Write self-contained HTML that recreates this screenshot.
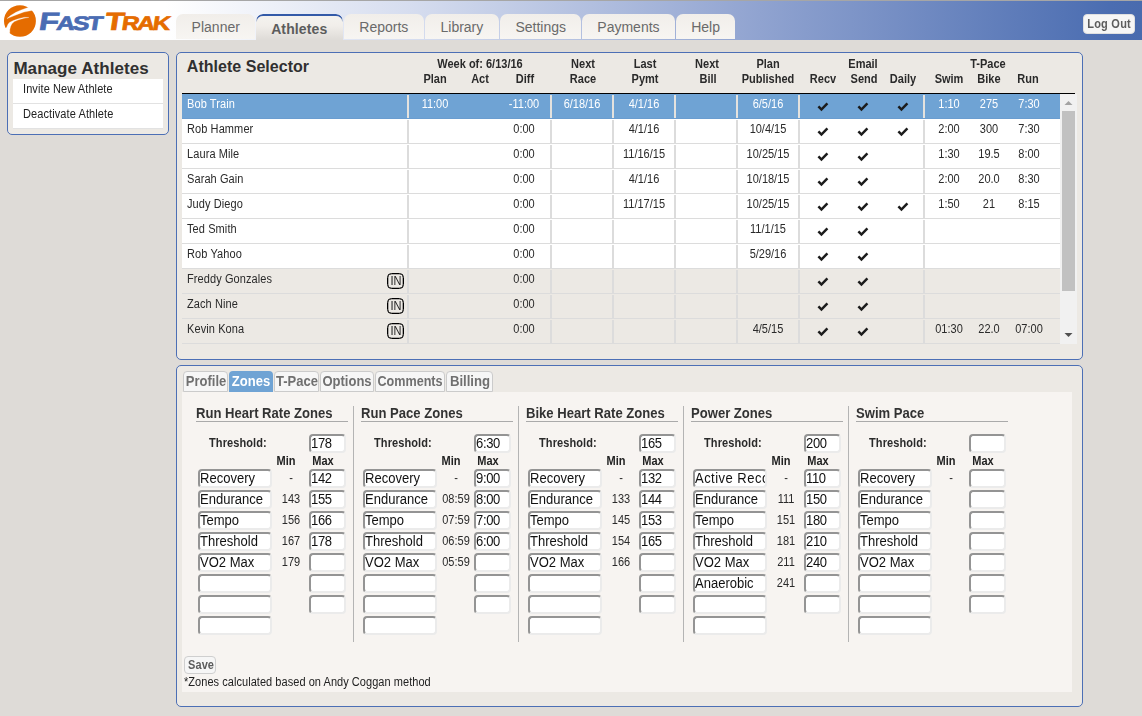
<!DOCTYPE html>
<html lang="en">
<head>
<meta charset="utf-8">
<title>FastTrak - Athletes</title>
<style>
html,body{margin:0;padding:0;}
body{width:1142px;height:716px;overflow:hidden;background:#dedbd7;font-family:"Liberation Sans", sans-serif;font-size:11px;color:#2a2a2a;position:relative;}
.b{position:absolute;box-sizing:border-box;}
.t{position:absolute;white-space:nowrap;display:block;}
.panel{background:#ece9e4;border:1px solid #4c6fb5;border-radius:5px;}
.inp{background:#fff;border-style:solid;border-width:2px;border-color:#949494 #ebebeb #ebebeb #949494;border-radius:4px;overflow:hidden;}
.inp span{position:absolute;left:0;top:-1px;font-size:14px;line-height:16px;white-space:nowrap;color:#111;transform:scaleX(0.93);transform-origin:0 0;}
.inp span.n{left:-0.3px;letter-spacing:-0.35px;}
.chk{position:absolute;}
</style>
</head>
<body>

<div class="b" style="left:0px;top:0px;width:1142px;height:40px;background:linear-gradient(to right,#ffffff 0,#ffffff 165px,#d6ddef 410px,#90a3d0 760px,#4b6db1 1110px,#496bae 1142px);"></div>
<div class="b" style="left:0px;top:0px;width:1142px;height:1px;background:#a6a6a6;"></div>
<svg class="b" style="left:0;top:0;width:40px;height:40px" viewBox="0 0 40 40">
<ellipse cx="19.95" cy="21" rx="15.95" ry="15.8" fill="#e56c00"/>
<path d="M7.0 18.6 L10.6 15.5 L15.9 12.35 L21.2 9.95 L28.1 7.55 L30.5 4.5 L35 8 L31.6 10.5 L23.9 12.1 L18.6 13.9 L13.3 16.05 Z" fill="#fff" stroke="#fff" stroke-width="0.3" stroke-linejoin="round"/>
<path d="M28.8 17.45 L23.9 17.4 L18.6 18.7 L13.3 20.6 L9.5 22.4 L8.0 24.3 L6.6 27.5 L3.5 29.5 L8.2 35.5 L9.8 32.2 L9.8 29.6 L10.6 26.4 L11.9 23.75 L14.3 21.6 L18.6 19.8 L23.9 18.2 Z" fill="#fff" stroke="#fff" stroke-width="0.3" stroke-linejoin="round"/>
</svg>
<div class="b" style="left:38.2px;top:7px;width:80px;height:28px;white-space:nowrap;font-weight:bold;transform-origin:0 23px;transform:scaleX(1.3) skewX(-7deg);line-height:28px;color:#4a6cb3;-webkit-text-stroke:0.7px #4a6cb3;letter-spacing:-1.7px;"><span style="font-size:25px;">F</span><span style="font-size:19.5px;">AST</span></div>
<div class="b" style="left:104.4px;top:7px;width:80px;height:28px;white-space:nowrap;font-weight:bold;transform-origin:0 23px;transform:scaleX(1.25) skewX(-7deg);line-height:28px;color:#e56c00;-webkit-text-stroke:0.7px #e56c00;letter-spacing:-1.7px;"><span style="font-size:25px;">T</span><span style="font-size:19.5px;">RAK</span></div>
<div class="b" style="left:176px;top:14px;width:79px;height:25px;border-radius:7px 7px 0 0;background:linear-gradient(#f1eeea,#f7f5f2);"></div>
<span class="t" style="top:19px;font-size:14px;line-height:16px;color:#6a6a6a;left:65.75px;width:300px;text-align:center;">Planner</span>
<div class="b" style="left:256px;top:14px;width:87px;height:26px;border-radius:7px 7px 0 0;background:linear-gradient(#f5f3f0,#f1eeea 45%,#dedbd7);"></div>
<div class="b" style="left:256px;top:14px;width:87px;height:26px;border-radius:7px 7px 0 0;border:1px solid #335aa8;border-top-width:2px;border-bottom:none;-webkit-mask-image:linear-gradient(to bottom,#000 0,#000 4px,transparent 8px);mask-image:linear-gradient(to bottom,#000 0,#000 4px,transparent 8px);"></div>
<span class="t" style="top:21px;font-size:14px;line-height:16px;font-weight:bold;color:#5c5c5c;letter-spacing:0.12px;left:149.20px;width:300px;text-align:center;text-indent:0.12px;">Athletes</span>
<div class="b" style="left:344px;top:14px;width:80px;height:25px;border-radius:7px 7px 0 0;background:linear-gradient(#f1eeea,#f7f5f2);"></div>
<span class="t" style="top:19px;font-size:14px;line-height:16px;color:#6a6a6a;left:233.80px;width:300px;text-align:center;">Reports</span>
<div class="b" style="left:425px;top:14px;width:74px;height:25px;border-radius:7px 7px 0 0;background:linear-gradient(#f1eeea,#f7f5f2);"></div>
<span class="t" style="top:19px;font-size:14px;line-height:16px;color:#6a6a6a;left:311.90px;width:300px;text-align:center;">Library</span>
<div class="b" style="left:500px;top:14px;width:81px;height:25px;border-radius:7px 7px 0 0;background:linear-gradient(#f1eeea,#f7f5f2);"></div>
<span class="t" style="top:19px;font-size:14px;line-height:16px;color:#6a6a6a;left:390.70px;width:300px;text-align:center;">Settings</span>
<div class="b" style="left:582px;top:14px;width:93px;height:25px;border-radius:7px 7px 0 0;background:linear-gradient(#f1eeea,#f7f5f2);"></div>
<span class="t" style="top:19px;font-size:14px;line-height:16px;color:#6a6a6a;left:478.45px;width:300px;text-align:center;">Payments</span>
<div class="b" style="left:676px;top:14px;width:59px;height:25px;border-radius:7px 7px 0 0;background:linear-gradient(#f1eeea,#f7f5f2);"></div>
<span class="t" style="top:19px;font-size:14px;line-height:16px;color:#6a6a6a;left:555.55px;width:300px;text-align:center;">Help</span>
<div class="b" style="left:1083px;top:14px;width:52px;height:20px;background:#f6f6f6;border:1px solid #e0e0e0;border-radius:4px;"></div>
<span class="t" style="top:17px;font-size:12px;line-height:14px;font-weight:bold;color:#5c5c5c;letter-spacing:0.25px;left:959.30px;width:300px;text-align:center;text-indent:0.25px;transform:scaleX(0.917);transform-origin:50% 0;">Log Out</span>
<div class="b panel" style="left:7px;top:52px;width:162px;height:83px;"></div>
<span class="t" style="top:59px;font-size:17px;line-height:19px;font-weight:bold;color:#303030;letter-spacing:0.06px;left:13.40px;">Manage Athletes</span>
<div class="b" style="left:13px;top:79px;width:150px;height:24px;background:#fff;"></div>
<div class="b" style="left:13px;top:103px;width:150px;height:1px;background:#e2e2e2;"></div>
<div class="b" style="left:13px;top:104px;width:150px;height:24px;background:#fff;"></div>
<div class="b" style="left:13px;top:128px;width:150px;height:1px;background:#e2e2e2;"></div>
<span class="t" style="top:82px;font-size:12px;line-height:14px;color:#222;letter-spacing:0.1px;left:23.20px;transform:scaleX(0.917);transform-origin:0 0;">Invite New Athlete</span>
<span class="t" style="top:107px;font-size:12px;line-height:14px;color:#222;letter-spacing:0.1px;left:23.20px;transform:scaleX(0.917);transform-origin:0 0;">Deactivate Athlete</span>
<div class="b panel" style="left:176px;top:52px;width:907px;height:308px;"></div>
<span class="t" style="top:58px;font-size:16px;line-height:18px;font-weight:bold;color:#303030;letter-spacing:0.03px;left:186.80px;">Athlete Selector</span>
<span class="t" style="top:57px;font-size:12px;line-height:14px;font-weight:bold;color:#2a2a2a;left:329.80px;width:300px;text-align:center;transform:scaleX(0.917);transform-origin:50% 0;">Week of: 6/13/16</span>
<span class="t" style="top:72px;font-size:12px;line-height:14px;font-weight:bold;color:#2a2a2a;left:285.20px;width:300px;text-align:center;transform:scaleX(0.917);transform-origin:50% 0;">Plan</span>
<span class="t" style="top:72px;font-size:12px;line-height:14px;font-weight:bold;color:#2a2a2a;left:330.20px;width:300px;text-align:center;transform:scaleX(0.917);transform-origin:50% 0;">Act</span>
<span class="t" style="top:72px;font-size:12px;line-height:14px;font-weight:bold;color:#2a2a2a;left:374.80px;width:300px;text-align:center;transform:scaleX(0.917);transform-origin:50% 0;">Diff</span>
<span class="t" style="top:57px;font-size:12px;line-height:14px;font-weight:bold;color:#2a2a2a;left:433.40px;width:300px;text-align:center;transform:scaleX(0.917);transform-origin:50% 0;">Next</span>
<span class="t" style="top:72px;font-size:12px;line-height:14px;font-weight:bold;color:#2a2a2a;left:433.20px;width:300px;text-align:center;transform:scaleX(0.917);transform-origin:50% 0;">Race</span>
<span class="t" style="top:57px;font-size:12px;line-height:14px;font-weight:bold;color:#2a2a2a;left:495.40px;width:300px;text-align:center;transform:scaleX(0.917);transform-origin:50% 0;">Last</span>
<span class="t" style="top:72px;font-size:12px;line-height:14px;font-weight:bold;color:#2a2a2a;left:495.10px;width:300px;text-align:center;transform:scaleX(0.917);transform-origin:50% 0;">Pymt</span>
<span class="t" style="top:57px;font-size:12px;line-height:14px;font-weight:bold;color:#2a2a2a;left:557.30px;width:300px;text-align:center;transform:scaleX(0.917);transform-origin:50% 0;">Next</span>
<span class="t" style="top:72px;font-size:12px;line-height:14px;font-weight:bold;color:#2a2a2a;left:557.60px;width:300px;text-align:center;transform:scaleX(0.917);transform-origin:50% 0;">Bill</span>
<span class="t" style="top:57px;font-size:12px;line-height:14px;font-weight:bold;color:#2a2a2a;left:618.00px;width:300px;text-align:center;transform:scaleX(0.917);transform-origin:50% 0;">Plan</span>
<span class="t" style="top:72px;font-size:12px;line-height:14px;font-weight:bold;color:#2a2a2a;left:618.10px;width:300px;text-align:center;transform:scaleX(0.917);transform-origin:50% 0;">Published</span>
<span class="t" style="top:72px;font-size:12px;line-height:14px;font-weight:bold;color:#2a2a2a;left:673.20px;width:300px;text-align:center;transform:scaleX(0.917);transform-origin:50% 0;">Recv</span>
<span class="t" style="top:57px;font-size:12px;line-height:14px;font-weight:bold;color:#2a2a2a;left:713.20px;width:300px;text-align:center;transform:scaleX(0.917);transform-origin:50% 0;">Email</span>
<span class="t" style="top:72px;font-size:12px;line-height:14px;font-weight:bold;color:#2a2a2a;left:713.50px;width:300px;text-align:center;transform:scaleX(0.917);transform-origin:50% 0;">Send</span>
<span class="t" style="top:72px;font-size:12px;line-height:14px;font-weight:bold;color:#2a2a2a;left:753.30px;width:300px;text-align:center;transform:scaleX(0.917);transform-origin:50% 0;">Daily</span>
<span class="t" style="top:57px;font-size:12px;line-height:14px;font-weight:bold;color:#2a2a2a;left:838.20px;width:300px;text-align:center;transform:scaleX(0.917);transform-origin:50% 0;">T-Pace</span>
<span class="t" style="top:72px;font-size:12px;line-height:14px;font-weight:bold;color:#2a2a2a;left:798.70px;width:300px;text-align:center;transform:scaleX(0.917);transform-origin:50% 0;">Swim</span>
<span class="t" style="top:72px;font-size:12px;line-height:14px;font-weight:bold;color:#2a2a2a;left:838.80px;width:300px;text-align:center;transform:scaleX(0.917);transform-origin:50% 0;">Bike</span>
<span class="t" style="top:72px;font-size:12px;line-height:14px;font-weight:bold;color:#2a2a2a;left:878.10px;width:300px;text-align:center;transform:scaleX(0.917);transform-origin:50% 0;">Run</span>
<div class="b" style="left:182px;top:93px;width:893px;height:1px;background:#000;"></div>
<div class="b row" style="left:182px;top:94px;width:878px;height:25px;background:#6fa3d4;border-bottom:1px solid #6a9dd0;">
<i class="b" style="left:225px;top:1px;width:2px;height:23px;background:#e4e2de"></i>
<i class="b" style="left:368px;top:1px;width:2px;height:23px;background:#e4e2de"></i>
<i class="b" style="left:430px;top:1px;width:2px;height:23px;background:#e4e2de"></i>
<i class="b" style="left:492px;top:1px;width:2px;height:23px;background:#e4e2de"></i>
<i class="b" style="left:554px;top:1px;width:2px;height:23px;background:#e4e2de"></i>
<i class="b" style="left:616px;top:1px;width:2px;height:23px;background:#e4e2de"></i>
<i class="b" style="left:741px;top:1px;width:2px;height:23px;background:#e4e2de"></i>
</div>
<span class="t" style="top:97px;font-size:12px;line-height:14px;color:#fff;letter-spacing:0.1px;left:187.30px;transform:scaleX(0.917);transform-origin:0 0;">Bob Train</span>
<span class="t" style="top:97px;font-size:12px;line-height:14px;color:#fff;left:285.00px;width:300px;text-align:center;transform:scaleX(0.917);transform-origin:50% 0;">11:00</span>
<span class="t" style="top:97px;font-size:12px;line-height:14px;color:#fff;left:373.80px;width:300px;text-align:center;transform:scaleX(0.917);transform-origin:50% 0;">-11:00</span>
<span class="t" style="top:97px;font-size:12px;line-height:14px;color:#fff;left:432.00px;width:300px;text-align:center;transform:scaleX(0.917);transform-origin:50% 0;">6/18/16</span>
<span class="t" style="top:97px;font-size:12px;line-height:14px;color:#fff;left:494.40px;width:300px;text-align:center;transform:scaleX(0.917);transform-origin:50% 0;">4/1/16</span>
<span class="t" style="top:97px;font-size:12px;line-height:14px;color:#fff;left:618.30px;width:300px;text-align:center;transform:scaleX(0.917);transform-origin:50% 0;">6/5/16</span>
<svg class="chk" style="left:817.0px;top:102px" width="12" height="10" viewBox="0 0 12 10"><path d="M0.5 5.35 L2.3 3.55 L4.45 5.7 L9.5 0.55 L11.3 2.35 L4.45 9.2 Z" fill="#1c1c1c"/></svg>
<svg class="chk" style="left:857.1px;top:102px" width="12" height="10" viewBox="0 0 12 10"><path d="M0.5 5.35 L2.3 3.55 L4.45 5.7 L9.5 0.55 L11.3 2.35 L4.45 9.2 Z" fill="#1c1c1c"/></svg>
<svg class="chk" style="left:897.0px;top:102px" width="12" height="10" viewBox="0 0 12 10"><path d="M0.5 5.35 L2.3 3.55 L4.45 5.7 L9.5 0.55 L11.3 2.35 L4.45 9.2 Z" fill="#1c1c1c"/></svg>
<span class="t" style="top:97px;font-size:12px;line-height:14px;color:#fff;left:799.30px;width:300px;text-align:center;transform:scaleX(0.917);transform-origin:50% 0;">1:10</span>
<span class="t" style="top:97px;font-size:12px;line-height:14px;color:#fff;left:838.60px;width:300px;text-align:center;transform:scaleX(0.917);transform-origin:50% 0;">275</span>
<span class="t" style="top:97px;font-size:12px;line-height:14px;color:#fff;left:879.00px;width:300px;text-align:center;transform:scaleX(0.917);transform-origin:50% 0;">7:30</span>
<div class="b row" style="left:182px;top:119px;width:878px;height:25px;background:#fff;border-bottom:1px solid #dcdcdc;">
<i class="b" style="left:225px;top:1px;width:2px;height:24px;background:#dcdcdc"></i>
<i class="b" style="left:368px;top:1px;width:2px;height:24px;background:#dcdcdc"></i>
<i class="b" style="left:430px;top:1px;width:2px;height:24px;background:#dcdcdc"></i>
<i class="b" style="left:492px;top:1px;width:2px;height:24px;background:#dcdcdc"></i>
<i class="b" style="left:554px;top:1px;width:2px;height:24px;background:#dcdcdc"></i>
<i class="b" style="left:616px;top:1px;width:2px;height:24px;background:#dcdcdc"></i>
<i class="b" style="left:741px;top:1px;width:2px;height:24px;background:#dcdcdc"></i>
</div>
<span class="t" style="top:122px;font-size:12px;line-height:14px;color:#2a2a2a;letter-spacing:0.1px;left:187.30px;transform:scaleX(0.917);transform-origin:0 0;">Rob Hammer</span>
<span class="t" style="top:122px;font-size:12px;line-height:14px;color:#2a2a2a;left:373.80px;width:300px;text-align:center;transform:scaleX(0.917);transform-origin:50% 0;">0:00</span>
<span class="t" style="top:122px;font-size:12px;line-height:14px;color:#2a2a2a;left:494.40px;width:300px;text-align:center;transform:scaleX(0.917);transform-origin:50% 0;">4/1/16</span>
<span class="t" style="top:122px;font-size:12px;line-height:14px;color:#2a2a2a;left:618.30px;width:300px;text-align:center;transform:scaleX(0.917);transform-origin:50% 0;">10/4/15</span>
<svg class="chk" style="left:817.0px;top:127px" width="12" height="10" viewBox="0 0 12 10"><path d="M0.5 5.35 L2.3 3.55 L4.45 5.7 L9.5 0.55 L11.3 2.35 L4.45 9.2 Z" fill="#1c1c1c"/></svg>
<svg class="chk" style="left:857.1px;top:127px" width="12" height="10" viewBox="0 0 12 10"><path d="M0.5 5.35 L2.3 3.55 L4.45 5.7 L9.5 0.55 L11.3 2.35 L4.45 9.2 Z" fill="#1c1c1c"/></svg>
<svg class="chk" style="left:897.0px;top:127px" width="12" height="10" viewBox="0 0 12 10"><path d="M0.5 5.35 L2.3 3.55 L4.45 5.7 L9.5 0.55 L11.3 2.35 L4.45 9.2 Z" fill="#1c1c1c"/></svg>
<span class="t" style="top:122px;font-size:12px;line-height:14px;color:#2a2a2a;left:799.30px;width:300px;text-align:center;transform:scaleX(0.917);transform-origin:50% 0;">2:00</span>
<span class="t" style="top:122px;font-size:12px;line-height:14px;color:#2a2a2a;left:838.60px;width:300px;text-align:center;transform:scaleX(0.917);transform-origin:50% 0;">300</span>
<span class="t" style="top:122px;font-size:12px;line-height:14px;color:#2a2a2a;left:879.00px;width:300px;text-align:center;transform:scaleX(0.917);transform-origin:50% 0;">7:30</span>
<div class="b row" style="left:182px;top:144px;width:878px;height:25px;background:#fff;border-bottom:1px solid #dcdcdc;">
<i class="b" style="left:225px;top:1px;width:2px;height:24px;background:#dcdcdc"></i>
<i class="b" style="left:368px;top:1px;width:2px;height:24px;background:#dcdcdc"></i>
<i class="b" style="left:430px;top:1px;width:2px;height:24px;background:#dcdcdc"></i>
<i class="b" style="left:492px;top:1px;width:2px;height:24px;background:#dcdcdc"></i>
<i class="b" style="left:554px;top:1px;width:2px;height:24px;background:#dcdcdc"></i>
<i class="b" style="left:616px;top:1px;width:2px;height:24px;background:#dcdcdc"></i>
<i class="b" style="left:741px;top:1px;width:2px;height:24px;background:#dcdcdc"></i>
</div>
<span class="t" style="top:147px;font-size:12px;line-height:14px;color:#2a2a2a;letter-spacing:0.1px;left:187.30px;transform:scaleX(0.917);transform-origin:0 0;">Laura Mile</span>
<span class="t" style="top:147px;font-size:12px;line-height:14px;color:#2a2a2a;left:373.80px;width:300px;text-align:center;transform:scaleX(0.917);transform-origin:50% 0;">0:00</span>
<span class="t" style="top:147px;font-size:12px;line-height:14px;color:#2a2a2a;left:494.40px;width:300px;text-align:center;transform:scaleX(0.917);transform-origin:50% 0;">11/16/15</span>
<span class="t" style="top:147px;font-size:12px;line-height:14px;color:#2a2a2a;left:618.30px;width:300px;text-align:center;transform:scaleX(0.917);transform-origin:50% 0;">10/25/15</span>
<svg class="chk" style="left:817.0px;top:152px" width="12" height="10" viewBox="0 0 12 10"><path d="M0.5 5.35 L2.3 3.55 L4.45 5.7 L9.5 0.55 L11.3 2.35 L4.45 9.2 Z" fill="#1c1c1c"/></svg>
<svg class="chk" style="left:857.1px;top:152px" width="12" height="10" viewBox="0 0 12 10"><path d="M0.5 5.35 L2.3 3.55 L4.45 5.7 L9.5 0.55 L11.3 2.35 L4.45 9.2 Z" fill="#1c1c1c"/></svg>
<span class="t" style="top:147px;font-size:12px;line-height:14px;color:#2a2a2a;left:799.30px;width:300px;text-align:center;transform:scaleX(0.917);transform-origin:50% 0;">1:30</span>
<span class="t" style="top:147px;font-size:12px;line-height:14px;color:#2a2a2a;left:838.60px;width:300px;text-align:center;transform:scaleX(0.917);transform-origin:50% 0;">19.5</span>
<span class="t" style="top:147px;font-size:12px;line-height:14px;color:#2a2a2a;left:879.00px;width:300px;text-align:center;transform:scaleX(0.917);transform-origin:50% 0;">8:00</span>
<div class="b row" style="left:182px;top:169px;width:878px;height:25px;background:#fff;border-bottom:1px solid #dcdcdc;">
<i class="b" style="left:225px;top:1px;width:2px;height:24px;background:#dcdcdc"></i>
<i class="b" style="left:368px;top:1px;width:2px;height:24px;background:#dcdcdc"></i>
<i class="b" style="left:430px;top:1px;width:2px;height:24px;background:#dcdcdc"></i>
<i class="b" style="left:492px;top:1px;width:2px;height:24px;background:#dcdcdc"></i>
<i class="b" style="left:554px;top:1px;width:2px;height:24px;background:#dcdcdc"></i>
<i class="b" style="left:616px;top:1px;width:2px;height:24px;background:#dcdcdc"></i>
<i class="b" style="left:741px;top:1px;width:2px;height:24px;background:#dcdcdc"></i>
</div>
<span class="t" style="top:172px;font-size:12px;line-height:14px;color:#2a2a2a;letter-spacing:0.1px;left:187.30px;transform:scaleX(0.917);transform-origin:0 0;">Sarah Gain</span>
<span class="t" style="top:172px;font-size:12px;line-height:14px;color:#2a2a2a;left:373.80px;width:300px;text-align:center;transform:scaleX(0.917);transform-origin:50% 0;">0:00</span>
<span class="t" style="top:172px;font-size:12px;line-height:14px;color:#2a2a2a;left:494.40px;width:300px;text-align:center;transform:scaleX(0.917);transform-origin:50% 0;">4/1/16</span>
<span class="t" style="top:172px;font-size:12px;line-height:14px;color:#2a2a2a;left:618.30px;width:300px;text-align:center;transform:scaleX(0.917);transform-origin:50% 0;">10/18/15</span>
<svg class="chk" style="left:817.0px;top:177px" width="12" height="10" viewBox="0 0 12 10"><path d="M0.5 5.35 L2.3 3.55 L4.45 5.7 L9.5 0.55 L11.3 2.35 L4.45 9.2 Z" fill="#1c1c1c"/></svg>
<svg class="chk" style="left:857.1px;top:177px" width="12" height="10" viewBox="0 0 12 10"><path d="M0.5 5.35 L2.3 3.55 L4.45 5.7 L9.5 0.55 L11.3 2.35 L4.45 9.2 Z" fill="#1c1c1c"/></svg>
<span class="t" style="top:172px;font-size:12px;line-height:14px;color:#2a2a2a;left:799.30px;width:300px;text-align:center;transform:scaleX(0.917);transform-origin:50% 0;">2:00</span>
<span class="t" style="top:172px;font-size:12px;line-height:14px;color:#2a2a2a;left:838.60px;width:300px;text-align:center;transform:scaleX(0.917);transform-origin:50% 0;">20.0</span>
<span class="t" style="top:172px;font-size:12px;line-height:14px;color:#2a2a2a;left:879.00px;width:300px;text-align:center;transform:scaleX(0.917);transform-origin:50% 0;">8:30</span>
<div class="b row" style="left:182px;top:194px;width:878px;height:25px;background:#fff;border-bottom:1px solid #dcdcdc;">
<i class="b" style="left:225px;top:1px;width:2px;height:24px;background:#dcdcdc"></i>
<i class="b" style="left:368px;top:1px;width:2px;height:24px;background:#dcdcdc"></i>
<i class="b" style="left:430px;top:1px;width:2px;height:24px;background:#dcdcdc"></i>
<i class="b" style="left:492px;top:1px;width:2px;height:24px;background:#dcdcdc"></i>
<i class="b" style="left:554px;top:1px;width:2px;height:24px;background:#dcdcdc"></i>
<i class="b" style="left:616px;top:1px;width:2px;height:24px;background:#dcdcdc"></i>
<i class="b" style="left:741px;top:1px;width:2px;height:24px;background:#dcdcdc"></i>
</div>
<span class="t" style="top:197px;font-size:12px;line-height:14px;color:#2a2a2a;letter-spacing:0.1px;left:187.30px;transform:scaleX(0.917);transform-origin:0 0;">Judy Diego</span>
<span class="t" style="top:197px;font-size:12px;line-height:14px;color:#2a2a2a;left:373.80px;width:300px;text-align:center;transform:scaleX(0.917);transform-origin:50% 0;">0:00</span>
<span class="t" style="top:197px;font-size:12px;line-height:14px;color:#2a2a2a;left:494.40px;width:300px;text-align:center;transform:scaleX(0.917);transform-origin:50% 0;">11/17/15</span>
<span class="t" style="top:197px;font-size:12px;line-height:14px;color:#2a2a2a;left:618.30px;width:300px;text-align:center;transform:scaleX(0.917);transform-origin:50% 0;">10/25/15</span>
<svg class="chk" style="left:817.0px;top:202px" width="12" height="10" viewBox="0 0 12 10"><path d="M0.5 5.35 L2.3 3.55 L4.45 5.7 L9.5 0.55 L11.3 2.35 L4.45 9.2 Z" fill="#1c1c1c"/></svg>
<svg class="chk" style="left:857.1px;top:202px" width="12" height="10" viewBox="0 0 12 10"><path d="M0.5 5.35 L2.3 3.55 L4.45 5.7 L9.5 0.55 L11.3 2.35 L4.45 9.2 Z" fill="#1c1c1c"/></svg>
<svg class="chk" style="left:897.0px;top:202px" width="12" height="10" viewBox="0 0 12 10"><path d="M0.5 5.35 L2.3 3.55 L4.45 5.7 L9.5 0.55 L11.3 2.35 L4.45 9.2 Z" fill="#1c1c1c"/></svg>
<span class="t" style="top:197px;font-size:12px;line-height:14px;color:#2a2a2a;left:799.30px;width:300px;text-align:center;transform:scaleX(0.917);transform-origin:50% 0;">1:50</span>
<span class="t" style="top:197px;font-size:12px;line-height:14px;color:#2a2a2a;left:838.60px;width:300px;text-align:center;transform:scaleX(0.917);transform-origin:50% 0;">21</span>
<span class="t" style="top:197px;font-size:12px;line-height:14px;color:#2a2a2a;left:879.00px;width:300px;text-align:center;transform:scaleX(0.917);transform-origin:50% 0;">8:15</span>
<div class="b row" style="left:182px;top:219px;width:878px;height:25px;background:#fff;border-bottom:1px solid #dcdcdc;">
<i class="b" style="left:225px;top:1px;width:2px;height:24px;background:#dcdcdc"></i>
<i class="b" style="left:368px;top:1px;width:2px;height:24px;background:#dcdcdc"></i>
<i class="b" style="left:430px;top:1px;width:2px;height:24px;background:#dcdcdc"></i>
<i class="b" style="left:492px;top:1px;width:2px;height:24px;background:#dcdcdc"></i>
<i class="b" style="left:554px;top:1px;width:2px;height:24px;background:#dcdcdc"></i>
<i class="b" style="left:616px;top:1px;width:2px;height:24px;background:#dcdcdc"></i>
<i class="b" style="left:741px;top:1px;width:2px;height:24px;background:#dcdcdc"></i>
</div>
<span class="t" style="top:222px;font-size:12px;line-height:14px;color:#2a2a2a;letter-spacing:0.1px;left:187.30px;transform:scaleX(0.917);transform-origin:0 0;">Ted Smith</span>
<span class="t" style="top:222px;font-size:12px;line-height:14px;color:#2a2a2a;left:373.80px;width:300px;text-align:center;transform:scaleX(0.917);transform-origin:50% 0;">0:00</span>
<span class="t" style="top:222px;font-size:12px;line-height:14px;color:#2a2a2a;left:618.30px;width:300px;text-align:center;transform:scaleX(0.917);transform-origin:50% 0;">11/1/15</span>
<svg class="chk" style="left:817.0px;top:227px" width="12" height="10" viewBox="0 0 12 10"><path d="M0.5 5.35 L2.3 3.55 L4.45 5.7 L9.5 0.55 L11.3 2.35 L4.45 9.2 Z" fill="#1c1c1c"/></svg>
<svg class="chk" style="left:857.1px;top:227px" width="12" height="10" viewBox="0 0 12 10"><path d="M0.5 5.35 L2.3 3.55 L4.45 5.7 L9.5 0.55 L11.3 2.35 L4.45 9.2 Z" fill="#1c1c1c"/></svg>
<div class="b row" style="left:182px;top:244px;width:878px;height:25px;background:#fff;border-bottom:1px solid #dcdcdc;">
<i class="b" style="left:225px;top:1px;width:2px;height:24px;background:#dcdcdc"></i>
<i class="b" style="left:368px;top:1px;width:2px;height:24px;background:#dcdcdc"></i>
<i class="b" style="left:430px;top:1px;width:2px;height:24px;background:#dcdcdc"></i>
<i class="b" style="left:492px;top:1px;width:2px;height:24px;background:#dcdcdc"></i>
<i class="b" style="left:554px;top:1px;width:2px;height:24px;background:#dcdcdc"></i>
<i class="b" style="left:616px;top:1px;width:2px;height:24px;background:#dcdcdc"></i>
<i class="b" style="left:741px;top:1px;width:2px;height:24px;background:#dcdcdc"></i>
</div>
<span class="t" style="top:247px;font-size:12px;line-height:14px;color:#2a2a2a;letter-spacing:0.1px;left:187.30px;transform:scaleX(0.917);transform-origin:0 0;">Rob Yahoo</span>
<span class="t" style="top:247px;font-size:12px;line-height:14px;color:#2a2a2a;left:373.80px;width:300px;text-align:center;transform:scaleX(0.917);transform-origin:50% 0;">0:00</span>
<span class="t" style="top:247px;font-size:12px;line-height:14px;color:#2a2a2a;left:618.30px;width:300px;text-align:center;transform:scaleX(0.917);transform-origin:50% 0;">5/29/16</span>
<svg class="chk" style="left:817.0px;top:252px" width="12" height="10" viewBox="0 0 12 10"><path d="M0.5 5.35 L2.3 3.55 L4.45 5.7 L9.5 0.55 L11.3 2.35 L4.45 9.2 Z" fill="#1c1c1c"/></svg>
<svg class="chk" style="left:857.1px;top:252px" width="12" height="10" viewBox="0 0 12 10"><path d="M0.5 5.35 L2.3 3.55 L4.45 5.7 L9.5 0.55 L11.3 2.35 L4.45 9.2 Z" fill="#1c1c1c"/></svg>
<div class="b row" style="left:182px;top:269px;width:878px;height:25px;background:#ece9e4;border-bottom:1px solid #dcdcdc;">
<i class="b" style="left:225px;top:1px;width:2px;height:24px;background:#dcdcdc"></i>
<i class="b" style="left:368px;top:1px;width:2px;height:24px;background:#dcdcdc"></i>
<i class="b" style="left:430px;top:1px;width:2px;height:24px;background:#dcdcdc"></i>
<i class="b" style="left:492px;top:1px;width:2px;height:24px;background:#dcdcdc"></i>
<i class="b" style="left:554px;top:1px;width:2px;height:24px;background:#dcdcdc"></i>
<i class="b" style="left:616px;top:1px;width:2px;height:24px;background:#dcdcdc"></i>
<i class="b" style="left:741px;top:1px;width:2px;height:24px;background:#dcdcdc"></i>
</div>
<span class="t" style="top:272px;font-size:12px;line-height:14px;color:#2a2a2a;letter-spacing:0.1px;left:187.30px;transform:scaleX(0.917);transform-origin:0 0;">Freddy Gonzales</span>
<span class="t" style="top:272px;font-size:12px;line-height:14px;color:#2a2a2a;left:373.80px;width:300px;text-align:center;transform:scaleX(0.917);transform-origin:50% 0;">0:00</span>
<svg class="chk" style="left:817.0px;top:277px" width="12" height="10" viewBox="0 0 12 10"><path d="M0.5 5.35 L2.3 3.55 L4.45 5.7 L9.5 0.55 L11.3 2.35 L4.45 9.2 Z" fill="#1c1c1c"/></svg>
<svg class="chk" style="left:857.1px;top:277px" width="12" height="10" viewBox="0 0 12 10"><path d="M0.5 5.35 L2.3 3.55 L4.45 5.7 L9.5 0.55 L11.3 2.35 L4.45 9.2 Z" fill="#1c1c1c"/></svg>
<div class="b" style="left:387px;top:273px;width:17px;height:16px;border:1px solid #000;border-radius:4.5px;box-shadow:inset 0 0 0 0.3px #000;"></div>
<span class="t" style="top:274px;font-size:12px;line-height:14px;color:#222;left:245.80px;width:300px;text-align:center;transform:scaleX(0.917);transform-origin:50% 0;">IN</span>
<div class="b row" style="left:182px;top:294px;width:878px;height:25px;background:#ece9e4;border-bottom:1px solid #dcdcdc;">
<i class="b" style="left:225px;top:1px;width:2px;height:24px;background:#dcdcdc"></i>
<i class="b" style="left:368px;top:1px;width:2px;height:24px;background:#dcdcdc"></i>
<i class="b" style="left:430px;top:1px;width:2px;height:24px;background:#dcdcdc"></i>
<i class="b" style="left:492px;top:1px;width:2px;height:24px;background:#dcdcdc"></i>
<i class="b" style="left:554px;top:1px;width:2px;height:24px;background:#dcdcdc"></i>
<i class="b" style="left:616px;top:1px;width:2px;height:24px;background:#dcdcdc"></i>
<i class="b" style="left:741px;top:1px;width:2px;height:24px;background:#dcdcdc"></i>
</div>
<span class="t" style="top:297px;font-size:12px;line-height:14px;color:#2a2a2a;letter-spacing:0.1px;left:187.30px;transform:scaleX(0.917);transform-origin:0 0;">Zach Nine</span>
<span class="t" style="top:297px;font-size:12px;line-height:14px;color:#2a2a2a;left:373.80px;width:300px;text-align:center;transform:scaleX(0.917);transform-origin:50% 0;">0:00</span>
<svg class="chk" style="left:817.0px;top:302px" width="12" height="10" viewBox="0 0 12 10"><path d="M0.5 5.35 L2.3 3.55 L4.45 5.7 L9.5 0.55 L11.3 2.35 L4.45 9.2 Z" fill="#1c1c1c"/></svg>
<svg class="chk" style="left:857.1px;top:302px" width="12" height="10" viewBox="0 0 12 10"><path d="M0.5 5.35 L2.3 3.55 L4.45 5.7 L9.5 0.55 L11.3 2.35 L4.45 9.2 Z" fill="#1c1c1c"/></svg>
<div class="b" style="left:387px;top:298px;width:17px;height:16px;border:1px solid #000;border-radius:4.5px;box-shadow:inset 0 0 0 0.3px #000;"></div>
<span class="t" style="top:299px;font-size:12px;line-height:14px;color:#222;left:245.80px;width:300px;text-align:center;transform:scaleX(0.917);transform-origin:50% 0;">IN</span>
<div class="b row" style="left:182px;top:319px;width:878px;height:25px;background:#ece9e4;border-bottom:1px solid #dcdcdc;">
<i class="b" style="left:225px;top:1px;width:2px;height:24px;background:#dcdcdc"></i>
<i class="b" style="left:368px;top:1px;width:2px;height:24px;background:#dcdcdc"></i>
<i class="b" style="left:430px;top:1px;width:2px;height:24px;background:#dcdcdc"></i>
<i class="b" style="left:492px;top:1px;width:2px;height:24px;background:#dcdcdc"></i>
<i class="b" style="left:554px;top:1px;width:2px;height:24px;background:#dcdcdc"></i>
<i class="b" style="left:616px;top:1px;width:2px;height:24px;background:#dcdcdc"></i>
<i class="b" style="left:741px;top:1px;width:2px;height:24px;background:#dcdcdc"></i>
</div>
<span class="t" style="top:322px;font-size:12px;line-height:14px;color:#2a2a2a;letter-spacing:0.1px;left:187.30px;transform:scaleX(0.917);transform-origin:0 0;">Kevin Kona</span>
<span class="t" style="top:322px;font-size:12px;line-height:14px;color:#2a2a2a;left:373.80px;width:300px;text-align:center;transform:scaleX(0.917);transform-origin:50% 0;">0:00</span>
<span class="t" style="top:322px;font-size:12px;line-height:14px;color:#2a2a2a;left:618.30px;width:300px;text-align:center;transform:scaleX(0.917);transform-origin:50% 0;">4/5/15</span>
<svg class="chk" style="left:817.0px;top:327px" width="12" height="10" viewBox="0 0 12 10"><path d="M0.5 5.35 L2.3 3.55 L4.45 5.7 L9.5 0.55 L11.3 2.35 L4.45 9.2 Z" fill="#1c1c1c"/></svg>
<svg class="chk" style="left:857.1px;top:327px" width="12" height="10" viewBox="0 0 12 10"><path d="M0.5 5.35 L2.3 3.55 L4.45 5.7 L9.5 0.55 L11.3 2.35 L4.45 9.2 Z" fill="#1c1c1c"/></svg>
<span class="t" style="top:322px;font-size:12px;line-height:14px;color:#2a2a2a;left:799.30px;width:300px;text-align:center;transform:scaleX(0.917);transform-origin:50% 0;">01:30</span>
<span class="t" style="top:322px;font-size:12px;line-height:14px;color:#2a2a2a;left:838.60px;width:300px;text-align:center;transform:scaleX(0.917);transform-origin:50% 0;">22.0</span>
<span class="t" style="top:322px;font-size:12px;line-height:14px;color:#2a2a2a;left:879.00px;width:300px;text-align:center;transform:scaleX(0.917);transform-origin:50% 0;">07:00</span>
<div class="b" style="left:387px;top:323px;width:17px;height:16px;border:1px solid #000;border-radius:4.5px;box-shadow:inset 0 0 0 0.3px #000;"></div>
<span class="t" style="top:324px;font-size:12px;line-height:14px;color:#222;left:245.80px;width:300px;text-align:center;transform:scaleX(0.917);transform-origin:50% 0;">IN</span>
<div class="b" style="left:1060px;top:94px;width:17px;height:250px;background:#f1f1f1;"></div>
<div class="b" style="left:1062px;top:111px;width:13px;height:180px;background:#c1c1c1;"></div>
<svg class="b" style="left:1064px;top:100px" width="9" height="6" viewBox="0 0 9 6"><path d="M0.5 5 L4.5 1 L8.5 5 Z" fill="#a3a3a3"/></svg>
<svg class="b" style="left:1064px;top:332px" width="9" height="6" viewBox="0 0 9 6"><path d="M0.5 1 L4.5 5 L8.5 1 Z" fill="#505050"/></svg>
<div class="b panel" style="left:176px;top:365px;width:907px;height:342px;"></div>
<div class="b" style="left:182px;top:392px;width:890px;height:300px;background:#f7f4f1;"></div>
<div class="b" style="left:183px;top:371px;width:45px;height:21px;background:#f6f6f6;border:1px solid #cbcbcb;border-radius:4px 4px 0 0;"></div>
<span class="t" style="top:373px;font-size:14px;line-height:16px;font-weight:bold;color:#707070;left:55.50px;width:300px;text-align:center;transform:scaleX(0.93);transform-origin:50% 0;">Profile</span>
<div class="b" style="left:229px;top:371px;width:44px;height:21px;background:#6fa3d4;border-radius:4px 4px 0 0;"></div>
<span class="t" style="top:373px;font-size:14px;line-height:16px;font-weight:bold;color:#fff;left:101.00px;width:300px;text-align:center;transform:scaleX(0.93);transform-origin:50% 0;">Zones</span>
<div class="b" style="left:274px;top:371px;width:45px;height:21px;background:#f6f6f6;border:1px solid #cbcbcb;border-radius:4px 4px 0 0;"></div>
<span class="t" style="top:373px;font-size:14px;line-height:16px;font-weight:bold;color:#707070;left:146.50px;width:300px;text-align:center;transform:scaleX(0.93);transform-origin:50% 0;">T-Pace</span>
<div class="b" style="left:320px;top:371px;width:54px;height:21px;background:#f6f6f6;border:1px solid #cbcbcb;border-radius:4px 4px 0 0;"></div>
<span class="t" style="top:373px;font-size:14px;line-height:16px;font-weight:bold;color:#707070;left:197.00px;width:300px;text-align:center;transform:scaleX(0.93);transform-origin:50% 0;">Options</span>
<div class="b" style="left:375px;top:371px;width:70px;height:21px;background:#f6f6f6;border:1px solid #cbcbcb;border-radius:4px 4px 0 0;"></div>
<span class="t" style="top:373px;font-size:14px;line-height:16px;font-weight:bold;color:#707070;left:260.00px;width:300px;text-align:center;transform:scaleX(0.9);transform-origin:50% 0;">Comments</span>
<div class="b" style="left:446px;top:371px;width:47px;height:21px;background:#f6f6f6;border:1px solid #cbcbcb;border-radius:4px 4px 0 0;"></div>
<span class="t" style="top:373px;font-size:14px;line-height:16px;font-weight:bold;color:#707070;left:319.50px;width:300px;text-align:center;transform:scaleX(0.94);transform-origin:50% 0;">Billing</span>
<span class="t" style="top:405px;font-size:14px;line-height:16px;font-weight:bold;color:#333;left:196.30px;transform:scaleX(0.934);transform-origin:0 0;">Run Heart Rate Zones</span>
<div class="b" style="left:196px;top:421px;width:152px;height:1px;background:#aaa;"></div>
<div class="b" style="left:353px;top:406px;width:1px;height:236px;background:#b4b4b4;"></div>
<span class="t" style="top:436px;font-size:12px;line-height:14px;font-weight:bold;color:#2a2a2a;letter-spacing:0.1px;left:209.40px;transform:scaleX(0.917);transform-origin:0 0;">Threshold:</span>
<div class="b inp" style="left:309px;top:434px;width:37px;height:19px;"><span class="n">178</span></div>
<span class="t" style="top:454px;font-size:12px;line-height:14px;font-weight:bold;color:#222;left:136.10px;width:300px;text-align:center;transform:scaleX(0.917);transform-origin:50% 0;">Min</span>
<span class="t" style="top:454px;font-size:12px;line-height:14px;font-weight:bold;color:#222;left:173.20px;width:300px;text-align:center;transform:scaleX(0.917);transform-origin:50% 0;">Max</span>
<div class="b inp" style="left:198px;top:469px;width:74px;height:19px;"><span>Recovery</span></div>
<span class="t" style="top:471px;font-size:12px;line-height:14px;color:#2a2a2a;left:141.20px;width:300px;text-align:center;transform:scaleX(0.917);transform-origin:50% 0;">-</span>
<div class="b inp" style="left:309px;top:469px;width:37px;height:19px;"><span class="n">142</span></div>
<div class="b inp" style="left:198px;top:490px;width:74px;height:19px;"><span>Endurance</span></div>
<span class="t" style="top:492px;font-size:12px;line-height:14px;color:#2a2a2a;left:141.20px;width:300px;text-align:center;transform:scaleX(0.917);transform-origin:50% 0;">143</span>
<div class="b inp" style="left:309px;top:490px;width:37px;height:19px;"><span class="n">155</span></div>
<div class="b inp" style="left:198px;top:511px;width:74px;height:19px;"><span>Tempo</span></div>
<span class="t" style="top:513px;font-size:12px;line-height:14px;color:#2a2a2a;left:141.20px;width:300px;text-align:center;transform:scaleX(0.917);transform-origin:50% 0;">156</span>
<div class="b inp" style="left:309px;top:511px;width:37px;height:19px;"><span class="n">166</span></div>
<div class="b inp" style="left:198px;top:532px;width:74px;height:19px;"><span>Threshold</span></div>
<span class="t" style="top:534px;font-size:12px;line-height:14px;color:#2a2a2a;left:141.20px;width:300px;text-align:center;transform:scaleX(0.917);transform-origin:50% 0;">167</span>
<div class="b inp" style="left:309px;top:532px;width:37px;height:19px;"><span class="n">178</span></div>
<div class="b inp" style="left:198px;top:553px;width:74px;height:19px;"><span>VO2 Max</span></div>
<span class="t" style="top:555px;font-size:12px;line-height:14px;color:#2a2a2a;left:141.20px;width:300px;text-align:center;transform:scaleX(0.917);transform-origin:50% 0;">179</span>
<div class="b inp" style="left:309px;top:553px;width:37px;height:19px;"></div>
<div class="b inp" style="left:198px;top:574px;width:74px;height:19px;"></div>
<div class="b inp" style="left:309px;top:574px;width:37px;height:19px;"></div>
<div class="b inp" style="left:198px;top:595px;width:74px;height:19px;"></div>
<div class="b inp" style="left:309px;top:595px;width:37px;height:19px;"></div>
<div class="b inp" style="left:198px;top:616px;width:74px;height:19px;"></div>
<span class="t" style="top:405px;font-size:14px;line-height:16px;font-weight:bold;color:#333;left:361.30px;transform:scaleX(0.934);transform-origin:0 0;">Run Pace Zones</span>
<div class="b" style="left:361px;top:421px;width:152px;height:1px;background:#aaa;"></div>
<div class="b" style="left:518px;top:406px;width:1px;height:236px;background:#b4b4b4;"></div>
<span class="t" style="top:436px;font-size:12px;line-height:14px;font-weight:bold;color:#2a2a2a;letter-spacing:0.1px;left:374.40px;transform:scaleX(0.917);transform-origin:0 0;">Threshold:</span>
<div class="b inp" style="left:474px;top:434px;width:37px;height:19px;"><span class="n">6:30</span></div>
<span class="t" style="top:454px;font-size:12px;line-height:14px;font-weight:bold;color:#222;left:301.10px;width:300px;text-align:center;transform:scaleX(0.917);transform-origin:50% 0;">Min</span>
<span class="t" style="top:454px;font-size:12px;line-height:14px;font-weight:bold;color:#222;left:338.20px;width:300px;text-align:center;transform:scaleX(0.917);transform-origin:50% 0;">Max</span>
<div class="b inp" style="left:363px;top:469px;width:74px;height:19px;"><span>Recovery</span></div>
<span class="t" style="top:471px;font-size:12px;line-height:14px;color:#2a2a2a;left:306.20px;width:300px;text-align:center;transform:scaleX(0.917);transform-origin:50% 0;">-</span>
<div class="b inp" style="left:474px;top:469px;width:37px;height:19px;"><span class="n">9:00</span></div>
<div class="b inp" style="left:363px;top:490px;width:74px;height:19px;"><span>Endurance</span></div>
<span class="t" style="top:492px;font-size:12px;line-height:14px;color:#2a2a2a;left:306.20px;width:300px;text-align:center;transform:scaleX(0.917);transform-origin:50% 0;">08:59</span>
<div class="b inp" style="left:474px;top:490px;width:37px;height:19px;"><span class="n">8:00</span></div>
<div class="b inp" style="left:363px;top:511px;width:74px;height:19px;"><span>Tempo</span></div>
<span class="t" style="top:513px;font-size:12px;line-height:14px;color:#2a2a2a;left:306.20px;width:300px;text-align:center;transform:scaleX(0.917);transform-origin:50% 0;">07:59</span>
<div class="b inp" style="left:474px;top:511px;width:37px;height:19px;"><span class="n">7:00</span></div>
<div class="b inp" style="left:363px;top:532px;width:74px;height:19px;"><span>Threshold</span></div>
<span class="t" style="top:534px;font-size:12px;line-height:14px;color:#2a2a2a;left:306.20px;width:300px;text-align:center;transform:scaleX(0.917);transform-origin:50% 0;">06:59</span>
<div class="b inp" style="left:474px;top:532px;width:37px;height:19px;"><span class="n">6:00</span></div>
<div class="b inp" style="left:363px;top:553px;width:74px;height:19px;"><span>VO2 Max</span></div>
<span class="t" style="top:555px;font-size:12px;line-height:14px;color:#2a2a2a;left:306.20px;width:300px;text-align:center;transform:scaleX(0.917);transform-origin:50% 0;">05:59</span>
<div class="b inp" style="left:474px;top:553px;width:37px;height:19px;"></div>
<div class="b inp" style="left:363px;top:574px;width:74px;height:19px;"></div>
<div class="b inp" style="left:474px;top:574px;width:37px;height:19px;"></div>
<div class="b inp" style="left:363px;top:595px;width:74px;height:19px;"></div>
<div class="b inp" style="left:474px;top:595px;width:37px;height:19px;"></div>
<div class="b inp" style="left:363px;top:616px;width:74px;height:19px;"></div>
<span class="t" style="top:405px;font-size:14px;line-height:16px;font-weight:bold;color:#333;left:526.30px;transform:scaleX(0.934);transform-origin:0 0;">Bike Heart Rate Zones</span>
<div class="b" style="left:526px;top:421px;width:152px;height:1px;background:#aaa;"></div>
<div class="b" style="left:683px;top:406px;width:1px;height:236px;background:#b4b4b4;"></div>
<span class="t" style="top:436px;font-size:12px;line-height:14px;font-weight:bold;color:#2a2a2a;letter-spacing:0.1px;left:539.40px;transform:scaleX(0.917);transform-origin:0 0;">Threshold:</span>
<div class="b inp" style="left:639px;top:434px;width:37px;height:19px;"><span class="n">165</span></div>
<span class="t" style="top:454px;font-size:12px;line-height:14px;font-weight:bold;color:#222;left:466.10px;width:300px;text-align:center;transform:scaleX(0.917);transform-origin:50% 0;">Min</span>
<span class="t" style="top:454px;font-size:12px;line-height:14px;font-weight:bold;color:#222;left:503.20px;width:300px;text-align:center;transform:scaleX(0.917);transform-origin:50% 0;">Max</span>
<div class="b inp" style="left:528px;top:469px;width:74px;height:19px;"><span>Recovery</span></div>
<span class="t" style="top:471px;font-size:12px;line-height:14px;color:#2a2a2a;left:471.20px;width:300px;text-align:center;transform:scaleX(0.917);transform-origin:50% 0;">-</span>
<div class="b inp" style="left:639px;top:469px;width:37px;height:19px;"><span class="n">132</span></div>
<div class="b inp" style="left:528px;top:490px;width:74px;height:19px;"><span>Endurance</span></div>
<span class="t" style="top:492px;font-size:12px;line-height:14px;color:#2a2a2a;left:471.20px;width:300px;text-align:center;transform:scaleX(0.917);transform-origin:50% 0;">133</span>
<div class="b inp" style="left:639px;top:490px;width:37px;height:19px;"><span class="n">144</span></div>
<div class="b inp" style="left:528px;top:511px;width:74px;height:19px;"><span>Tempo</span></div>
<span class="t" style="top:513px;font-size:12px;line-height:14px;color:#2a2a2a;left:471.20px;width:300px;text-align:center;transform:scaleX(0.917);transform-origin:50% 0;">145</span>
<div class="b inp" style="left:639px;top:511px;width:37px;height:19px;"><span class="n">153</span></div>
<div class="b inp" style="left:528px;top:532px;width:74px;height:19px;"><span>Threshold</span></div>
<span class="t" style="top:534px;font-size:12px;line-height:14px;color:#2a2a2a;left:471.20px;width:300px;text-align:center;transform:scaleX(0.917);transform-origin:50% 0;">154</span>
<div class="b inp" style="left:639px;top:532px;width:37px;height:19px;"><span class="n">165</span></div>
<div class="b inp" style="left:528px;top:553px;width:74px;height:19px;"><span>VO2 Max</span></div>
<span class="t" style="top:555px;font-size:12px;line-height:14px;color:#2a2a2a;left:471.20px;width:300px;text-align:center;transform:scaleX(0.917);transform-origin:50% 0;">166</span>
<div class="b inp" style="left:639px;top:553px;width:37px;height:19px;"></div>
<div class="b inp" style="left:528px;top:574px;width:74px;height:19px;"></div>
<div class="b inp" style="left:639px;top:574px;width:37px;height:19px;"></div>
<div class="b inp" style="left:528px;top:595px;width:74px;height:19px;"></div>
<div class="b inp" style="left:639px;top:595px;width:37px;height:19px;"></div>
<div class="b inp" style="left:528px;top:616px;width:74px;height:19px;"></div>
<span class="t" style="top:405px;font-size:14px;line-height:16px;font-weight:bold;color:#333;left:691.30px;transform:scaleX(0.934);transform-origin:0 0;">Power Zones</span>
<div class="b" style="left:691px;top:421px;width:152px;height:1px;background:#aaa;"></div>
<div class="b" style="left:848px;top:406px;width:1px;height:236px;background:#b4b4b4;"></div>
<span class="t" style="top:436px;font-size:12px;line-height:14px;font-weight:bold;color:#2a2a2a;letter-spacing:0.1px;left:704.40px;transform:scaleX(0.917);transform-origin:0 0;">Threshold:</span>
<div class="b inp" style="left:804px;top:434px;width:37px;height:19px;"><span class="n">200</span></div>
<span class="t" style="top:454px;font-size:12px;line-height:14px;font-weight:bold;color:#222;left:631.10px;width:300px;text-align:center;transform:scaleX(0.917);transform-origin:50% 0;">Min</span>
<span class="t" style="top:454px;font-size:12px;line-height:14px;font-weight:bold;color:#222;left:668.20px;width:300px;text-align:center;transform:scaleX(0.917);transform-origin:50% 0;">Max</span>
<div class="b inp" style="left:693px;top:469px;width:74px;height:19px;"><span style="letter-spacing:0.5px">Active Recovery</span></div>
<span class="t" style="top:471px;font-size:12px;line-height:14px;color:#2a2a2a;left:636.20px;width:300px;text-align:center;transform:scaleX(0.917);transform-origin:50% 0;">-</span>
<div class="b inp" style="left:804px;top:469px;width:37px;height:19px;"><span class="n">110</span></div>
<div class="b inp" style="left:693px;top:490px;width:74px;height:19px;"><span>Endurance</span></div>
<span class="t" style="top:492px;font-size:12px;line-height:14px;color:#2a2a2a;left:636.20px;width:300px;text-align:center;transform:scaleX(0.917);transform-origin:50% 0;">111</span>
<div class="b inp" style="left:804px;top:490px;width:37px;height:19px;"><span class="n">150</span></div>
<div class="b inp" style="left:693px;top:511px;width:74px;height:19px;"><span>Tempo</span></div>
<span class="t" style="top:513px;font-size:12px;line-height:14px;color:#2a2a2a;left:636.20px;width:300px;text-align:center;transform:scaleX(0.917);transform-origin:50% 0;">151</span>
<div class="b inp" style="left:804px;top:511px;width:37px;height:19px;"><span class="n">180</span></div>
<div class="b inp" style="left:693px;top:532px;width:74px;height:19px;"><span>Threshold</span></div>
<span class="t" style="top:534px;font-size:12px;line-height:14px;color:#2a2a2a;left:636.20px;width:300px;text-align:center;transform:scaleX(0.917);transform-origin:50% 0;">181</span>
<div class="b inp" style="left:804px;top:532px;width:37px;height:19px;"><span class="n">210</span></div>
<div class="b inp" style="left:693px;top:553px;width:74px;height:19px;"><span>VO2 Max</span></div>
<span class="t" style="top:555px;font-size:12px;line-height:14px;color:#2a2a2a;left:636.20px;width:300px;text-align:center;transform:scaleX(0.917);transform-origin:50% 0;">211</span>
<div class="b inp" style="left:804px;top:553px;width:37px;height:19px;"><span class="n">240</span></div>
<div class="b inp" style="left:693px;top:574px;width:74px;height:19px;"><span>Anaerobic</span></div>
<span class="t" style="top:576px;font-size:12px;line-height:14px;color:#2a2a2a;left:636.20px;width:300px;text-align:center;transform:scaleX(0.917);transform-origin:50% 0;">241</span>
<div class="b inp" style="left:804px;top:574px;width:37px;height:19px;"></div>
<div class="b inp" style="left:693px;top:595px;width:74px;height:19px;"></div>
<div class="b inp" style="left:804px;top:595px;width:37px;height:19px;"></div>
<div class="b inp" style="left:693px;top:616px;width:74px;height:19px;"></div>
<span class="t" style="top:405px;font-size:14px;line-height:16px;font-weight:bold;color:#333;left:856.30px;transform:scaleX(0.934);transform-origin:0 0;">Swim Pace</span>
<div class="b" style="left:856px;top:421px;width:152px;height:1px;background:#aaa;"></div>
<span class="t" style="top:436px;font-size:12px;line-height:14px;font-weight:bold;color:#2a2a2a;letter-spacing:0.1px;left:869.40px;transform:scaleX(0.917);transform-origin:0 0;">Threshold:</span>
<div class="b inp" style="left:969px;top:434px;width:37px;height:19px;"></div>
<span class="t" style="top:454px;font-size:12px;line-height:14px;font-weight:bold;color:#222;left:796.10px;width:300px;text-align:center;transform:scaleX(0.917);transform-origin:50% 0;">Min</span>
<span class="t" style="top:454px;font-size:12px;line-height:14px;font-weight:bold;color:#222;left:833.20px;width:300px;text-align:center;transform:scaleX(0.917);transform-origin:50% 0;">Max</span>
<div class="b inp" style="left:858px;top:469px;width:74px;height:19px;"><span>Recovery</span></div>
<span class="t" style="top:471px;font-size:12px;line-height:14px;color:#2a2a2a;left:801.20px;width:300px;text-align:center;transform:scaleX(0.917);transform-origin:50% 0;">-</span>
<div class="b inp" style="left:969px;top:469px;width:37px;height:19px;"></div>
<div class="b inp" style="left:858px;top:490px;width:74px;height:19px;"><span>Endurance</span></div>
<div class="b inp" style="left:969px;top:490px;width:37px;height:19px;"></div>
<div class="b inp" style="left:858px;top:511px;width:74px;height:19px;"><span>Tempo</span></div>
<div class="b inp" style="left:969px;top:511px;width:37px;height:19px;"></div>
<div class="b inp" style="left:858px;top:532px;width:74px;height:19px;"><span>Threshold</span></div>
<div class="b inp" style="left:969px;top:532px;width:37px;height:19px;"></div>
<div class="b inp" style="left:858px;top:553px;width:74px;height:19px;"><span>VO2 Max</span></div>
<div class="b inp" style="left:969px;top:553px;width:37px;height:19px;"></div>
<div class="b inp" style="left:858px;top:574px;width:74px;height:19px;"></div>
<div class="b inp" style="left:969px;top:574px;width:37px;height:19px;"></div>
<div class="b inp" style="left:858px;top:595px;width:74px;height:19px;"></div>
<div class="b inp" style="left:969px;top:595px;width:37px;height:19px;"></div>
<div class="b inp" style="left:858px;top:616px;width:74px;height:19px;"></div>
<div class="b" style="left:184px;top:656px;width:32px;height:18px;background:#f6f6f6;border:1px solid #cfcfcf;border-radius:4px;"></div>
<span class="t" style="top:658px;font-size:12px;line-height:14px;font-weight:bold;color:#5c5c5c;letter-spacing:0.1px;left:50.60px;width:300px;text-align:center;text-indent:0.1px;transform:scaleX(0.917);transform-origin:50% 0;">Save</span>
<span class="t" style="top:675px;font-size:12px;line-height:14px;color:#222;letter-spacing:0.05px;left:184.30px;transform:scaleX(0.917);transform-origin:0 0;">*Zones calculated based on Andy Coggan method</span>
</body>
</html>
